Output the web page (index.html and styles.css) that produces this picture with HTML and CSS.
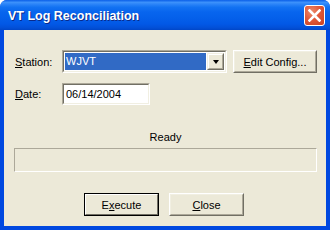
FILE: index.html
```html
<!DOCTYPE html>
<html>
<head>
<meta charset="utf-8">
<link rel="stylesheet" href="styles.css">
</head>
<body>
<div class="window">
  <div class="titlebar">
    <span class="title">VT Log Reconciliation</span>
    <span class="close-btn">
      <svg width="13" height="13" viewBox="0 0 13 13"><path d="M1.5 1.5 L11.5 11.5 M11.5 1.5 L1.5 11.5" stroke="#fff" stroke-width="2.6" stroke-linecap="square"/></svg>
    </span>
  </div>
  <div class="client">
    <div class="row row-station">
      <span class="lbl"><u>S</u>tation:</span>
      <div class="sunken combo">
        <div class="sunken-inner combo-inner">
          <div class="combo-field"><span class="combo-sel">WJVT</span></div>
          <div class="drop-btn"><div class="drop-btn-inner"><span class="tri"></span></div></div>
        </div>
      </div>
      <div class="btn btn-edit"><div class="btn-inner"><u>E</u>dit Config...</div></div>
    </div>
    <div class="row row-date">
      <span class="lbl"><u>D</u>ate:</span>
      <div class="sunken date">
        <div class="sunken-inner date-inner">06/14/2004</div>
      </div>
    </div>
    <div class="status">Ready</div>
    <div class="progress"></div>
    <div class="buttons">
      <div class="btn btn-default"><div class="btn-inner">E<u>x</u>ecute</div></div>
      <div class="btn"><div class="btn-inner"><u>C</u>lose</div></div>
    </div>
  </div>
</div>
</body>
</html>
```
FILE: styles.css
```css
html, body {
  margin: 0;
  padding: 0;
  background: #ffffff;
}
.window {
  width: 330px;
  height: 230px;
  box-sizing: border-box;
  display: flex;
  flex-direction: column;
  background: #0048e0;
  border-radius: 7px 7px 0 0;
  overflow: hidden;
  font-family: "Liberation Sans", Arial, sans-serif;
  font-size: 11px;
  color: #000;
}
.titlebar {
  height: 30px;
  flex: none;
  display: flex;
  align-items: center;
  justify-content: space-between;
  padding: 0 5px 0 8px;
  background: linear-gradient(to bottom, #0a5fe8 0%, #3c91fb 8%, #2b84f8 14%, #1272f2 24%, #0865ee 40%, #0560ea 60%, #0258e6 80%, #0250d8 92%, #0046c8 100%);
  box-sizing: border-box;
}
.title {
  color: #fff;
  font-weight: bold;
  font-size: 12.5px;
  text-shadow: 1px 1px 0 #0a2a8a;
  padding-top: 1px;
}
.close-btn {
  width: 19px;
  height: 19px;
  border: 1px solid #fff;
  border-radius: 3px;
  display: flex;
  align-items: center;
  justify-content: center;
  background: radial-gradient(circle at 35% 30%, #ec8b6c 0%, #e1593a 45%, #c8401f 100%);
  margin-top: 1px;
}
.close-btn svg {
  display: block;
}
.client {
  flex: 1;
  margin: 0 4px 4px 4px;
  background: #ece9d8;
  padding: 20px 9px 0 10px;
  display: flex;
  flex-direction: column;
}
.row {
  display: flex;
  align-items: center;
}
.lbl {
  width: 47px;
  padding-left: 1px;
}
.row-date {
  margin-top: 10px;
}
.sunken {
  box-sizing: border-box;
  border: 1px solid;
  border-color: #aca899 #ffffff #ffffff #aca899;
}
.sunken-inner {
  box-sizing: border-box;
  border: 1px solid;
  border-color: #716f64 #f1efe2 #f1efe2 #716f64;
  height: 100%;
  background: #fff;
}
.combo {
  width: 165px;
  height: 23px;
}
.combo-inner {
  display: flex;
  padding: 1px;
}
.combo-field {
  flex: 1;
  display: flex;
  padding-right: 1px;
}
.combo-sel {
  flex: 1;
  background: #316ac5;
  color: #fff;
  padding-left: 1px;
  line-height: 17px;
}
.drop-btn {
  width: 17px;
  box-sizing: border-box;
  border: 1px solid;
  border-color: #f1efe2 #716f64 #716f64 #f1efe2;
}
.drop-btn-inner {
  height: 100%;
  box-sizing: border-box;
  border: 1px solid;
  border-color: #fff #aca899 #aca899 #fff;
  background: #ece9d8;
  display: flex;
  align-items: center;
  justify-content: center;
}
.tri {
  width: 0;
  height: 0;
  border-left: 3.5px solid transparent;
  border-right: 3.5px solid transparent;
  border-top: 4px solid #000;
  margin-top: 1px;
}
.date {
  width: 88px;
  height: 22px;
}
.date-inner {
  padding-left: 2px;
  line-height: 18px;
}
.btn {
  box-sizing: border-box;
  width: 75px;
  height: 23px;
  border: 1px solid;
  border-color: #fff #716f64 #716f64 #fff;
  background: #ece9d8;
}
.btn-inner {
  box-sizing: border-box;
  height: 100%;
  border: 1px solid;
  border-color: #f1efe2 #aca899 #aca899 #f1efe2;
  display: flex;
  align-items: center;
  justify-content: center;
}
.btn-edit {
  width: 84px;
  margin-left: 6px;
}
.btn-default {
  border: 1px solid #000;
}
.btn-default .btn-inner {
  border-color: #fff #716f64 #716f64 #fff;
}
.status {
  margin-top: 26px;
  text-align: center;
  line-height: 13px;
  height: 13px;
}
.progress {
  margin-top: 4px;
  width: 303px;
  height: 24px;
  box-sizing: border-box;
  border: 1px solid;
  border-color: #aca899 #ffffff #ffffff #aca899;
}
.buttons {
  margin-top: 21px;
  display: flex;
  justify-content: center;
  gap: 10px;
  padding-right: 3px;
}
u {
  text-decoration: underline;
  text-underline-offset: 1px;
}
```
